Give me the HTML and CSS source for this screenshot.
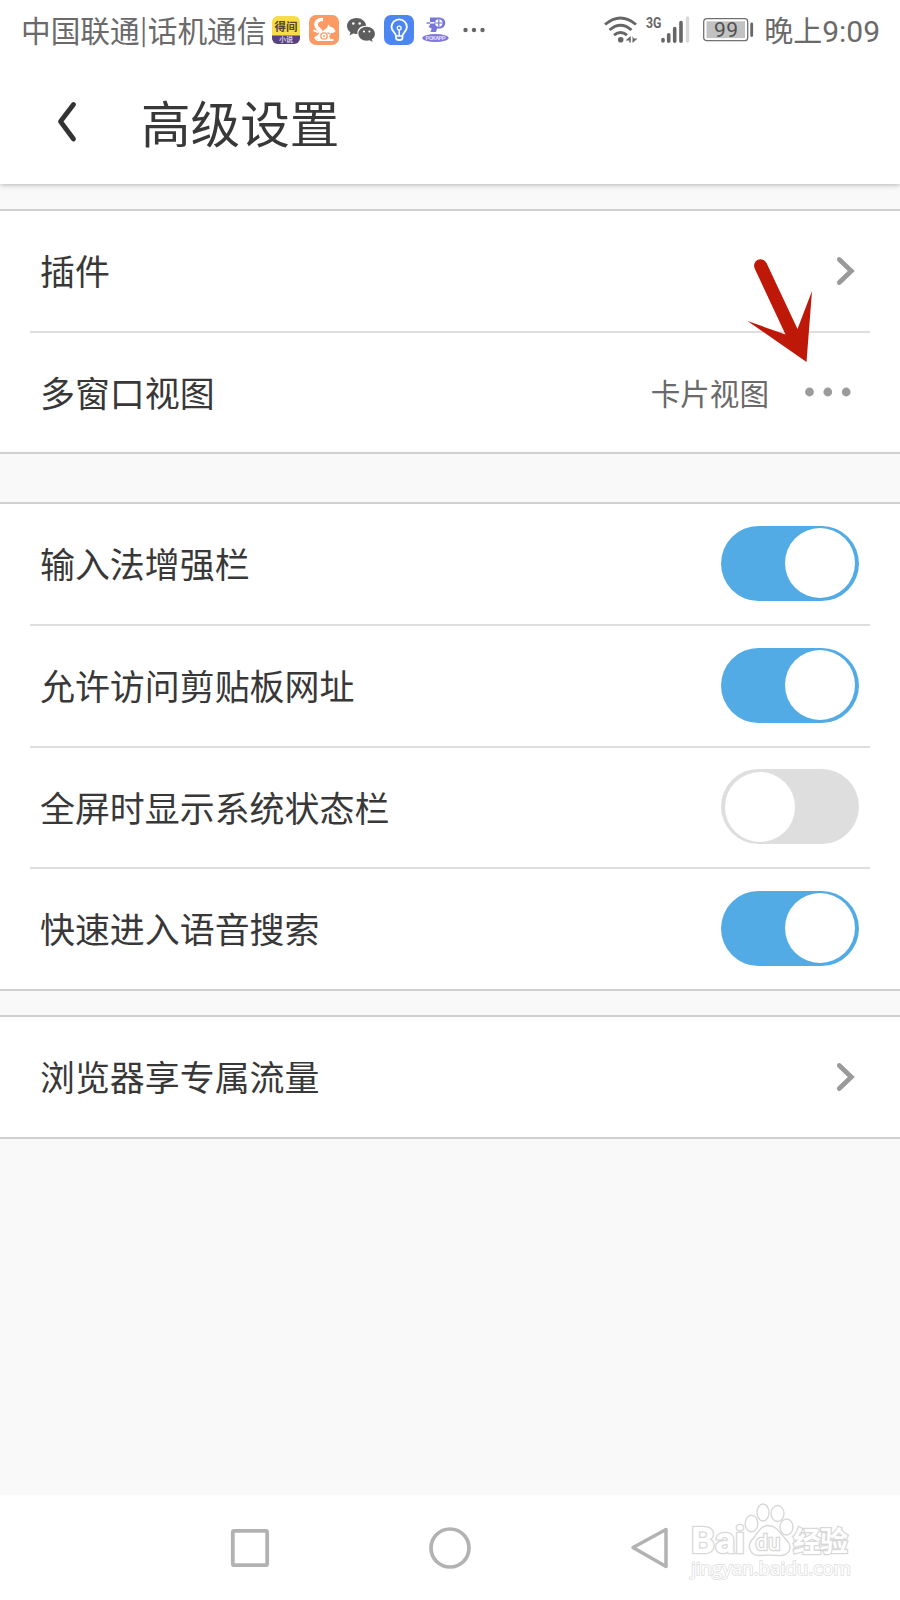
FILE: index.html
```html
<!DOCTYPE html>
<html lang="zh-CN">
<head>
<meta charset="utf-8">
<title>高级设置</title>
<link rel="stylesheet" href="styles.css">
</head>
<body>
<div class="screen">
  <header class="top">
    <div class="status">
      <span class="carrier">中国联通<span class="bar">|</span>话机通信</span>
      <div class="notices">
        <svg width="28" height="28" viewBox="0 0 28 28">
          <rect width="28" height="28" rx="6" fill="#f8dc4c"/>
          <path d="M0 19.500H28V22a6 6 0 0 1-6 6H6a6 6 0 0 1-6-6z" fill="#57407f"/>
          <text class="cjk" x="2.500" y="15" font-size="11.500" font-weight="700" fill="#54482e">得间</text>
          <text class="cjk" x="7" y="26" font-size="7" font-weight="700" fill="#d6cce0">小说</text>
        </svg>
        <svg width="30" height="30" viewBox="0 0 30 30">
          <rect width="30" height="30" rx="7" fill="#fb9a62"/>
          <path d="M14 4.500C9 4 6 7.500 7.500 11.500c1 2.500 4.500 3 4.500 6 0 2.500-2.500 4.500-6 6.500" fill="none" stroke="#fff" stroke-width="3.600"/>
          <path d="M4.500 15.500c2 .3 3.500.8 5 2" fill="none" stroke="#fff" stroke-width="2"/>
          <path d="M7 26c2-1 3-3 4-6 1-4 5-5 7-7.500l1.500-3.300 1.500 2.500c3 .3 5 2.300 5.500 4.800-1.500 1.300-3 1.500-4.500 1.500-.3 1.200-1 2.200-2 3l1.500 3h3v2z" fill="#fff"/>
          <circle cx="15" cy="21" r="3.200" fill="none" stroke="#fb9a62" stroke-width="1.300"/>
          <circle cx="15" cy="21" r="1" fill="#fb9a62"/>
          <path d="M18.500 17.500l2.500 1.500" stroke="#fb9a62" stroke-width="1.200"/>
        </svg>
        <svg width="28" height="25" viewBox="0 0 28 25">
          <path d="M9.500 0C4 0 0 3.600 0 8c0 2.600 1.300 4.700 3.400 6.200L2.500 17.500 6.200 15.600c1.500.4 3 .6 4.300.4-.8-5 3.500-8.600 8.700-8.300C18.500 3.200 14.600 0 9.500 0z" fill="#5e5e5e"/>
          <path d="M19.700 8.800c-4.700 0-8.300 3-8.300 6.900s3.600 7 8.300 7c1 0 2-.1 2.900-.4l3 1.700-.7-2.800c1.900-1.300 3-3.200 3-5.500 0-3.900-3.700-6.900-8.200-6.900z" fill="#5e5e5e"/>
          <g fill="#fff"><circle cx="6.300" cy="5.500" r="1.300"/><circle cx="12.700" cy="5.500" r="1.300"/><circle cx="17" cy="13.500" r="1.100"/><circle cx="22.400" cy="13.500" r="1.100"/></g>
        </svg>
        <svg width="30" height="30" viewBox="0 0 30 30">
          <rect width="30" height="30" rx="7" fill="#4b86f3"/>
          <path d="M12 21c0-3-4.500-4.500-4.500-9a7.700 7.700 0 0 1 15.400 0C22.900 16.500 18.500 18 18.500 21v2q0 2-3.200 2t-3.300-2z" fill="none" stroke="#fff" stroke-width="1.800"/>
          <path d="M12 21h6.500M15.200 21v-6" fill="none" stroke="#fff" stroke-width="1.500"/>
          <circle cx="15.200" cy="13" r="1.900" fill="none" stroke="#fff" stroke-width="1.300"/>
        </svg>
        <svg width="27" height="26" viewBox="0 0 27 26">
          <path d="M8 .500h9.500a5.800 5.500 0 0 1 0 11H15L14 15H8.500l1.200-3.500L6.500 10 8 8z" fill="#7776d8"/>
          <circle cx="16.800" cy="6" r="3.700" fill="#fff"/>
          <path d="M13 6h7.500M16.800 2.300v7.400" stroke="#7776d8" stroke-width="1.200"/>
          <path d="M4.500 6H8" stroke="#7776d8" stroke-width="1.400"/>
          <path d="M8 5.800h4.500" stroke="#fff" stroke-width="1.500"/>
          <ellipse cx="13.500" cy="21" rx="13.200" ry="4" fill="#8178da"/>
          <text class="latin" x="3.500" y="23.300" font-size="6" font-weight="700" fill="#ded9fa" textLength="20">POKAPP</text>
        </svg>
        <svg class="dots" width="22" height="6" viewBox="0 0 22 6" fill="#666"><circle cx="2.500" cy="3" r="2.200"/><circle cx="11" cy="3" r="2.200"/><circle cx="19.500" cy="3" r="2.200"/></svg>
      </div>
      <div class="signals">
        <svg class="wifi" width="34" height="28" viewBox="0 0 34 28" fill="none" stroke="#666" stroke-width="2.900">
          <path d="M1 8.500Q16.500-4.500 32 8.500M5.500 14Q16.500 4.500 27.500 14M10 19.200Q16.500 13.800 23 19.200"/>
          <circle cx="16.700" cy="23.700" r="2.800" fill="#666" stroke="none"/>
          <path d="M26.800 20v6.500h-1.500v-2H21.500zM28.500 27v-7l1.300 2.500h3.700z" fill="#666" stroke="none"/>
        </svg>
        <svg width="45" height="28" viewBox="0 0 45 28">
          <text class="latin" x="0" y="11.500" font-size="15" font-weight="700" fill="#666" textLength="15.500" lengthAdjust="spacingAndGlyphs">3G</text>
          <path d="M17 23.500v1.500M22.700 18.700v6.500M28.700 12.500v12.700M35 6.500v18.700" stroke="#666" stroke-width="3.600" stroke-linecap="round"/>
          <path d="M41.500 2v23" stroke="#d8d8d8" stroke-width="3.400" stroke-linecap="round"/>
        </svg>
        <svg class="battery" width="50" height="24" viewBox="0 0 50 24">
          <rect x=".7" y=".7" width="44" height="22" rx="3" fill="#fff" stroke="#707070" stroke-width="1.300"/>
          <rect x="3.500" y="3.300" width="38.500" height="16.800" fill="#c2c2c2"/>
          <path d="M48.700 6v11.500" stroke="#666" stroke-width="2.800" stroke-linecap="round"/>
          <text class="latin" x="11" y="19.200" font-size="21" fill="#505050" textLength="24">99</text>
        </svg>
        <span class="clock">晚上<span class="digits">9:09</span></span>
      </div>
    </div>
    <div class="titlebar">
      <svg class="back" width="20" height="42" viewBox="0 0 20 42"><path d="M16.500 3.500L3.500 20.500l13 17.500" fill="none" stroke="#333" stroke-width="4.800" stroke-linecap="round" stroke-linejoin="round"/></svg>
      <h1 class="title">高级设置</h1>
    </div>
  </header>

  <main class="groups">
    <section class="group">
      <div class="row"><span class="label">插件</span>
        <svg class="chevron" width="20" height="28" viewBox="0 0 20 28"><path d="M3.300 2.500l12 11.500-12 11.500" fill="none" stroke="#9a9a9a" stroke-width="4.800" stroke-linecap="round" stroke-linejoin="miter"/></svg>
      </div>
      <div class="row short"><span class="label">多窗口视图</span><span class="value">卡片视图</span>
        <svg class="more" width="46" height="10" viewBox="0 0 46 10" fill="#9b9b9b"><circle cx="4.500" cy="5" r="4.400"/><circle cx="22.800" cy="5" r="4.400"/><circle cx="41.200" cy="5" r="4.400"/></svg>
      </div>
    </section>
    <section class="group">
      <div class="row"><span class="label">输入法增强栏</span><span class="switch on"></span></div>
      <div class="row"><span class="label">允许访问剪贴板网址</span><span class="switch on"></span></div>
      <div class="row short"><span class="label">全屏时显示系统状态栏</span><span class="switch"></span></div>
      <div class="row"><span class="label">快速进入语音搜索</span><span class="switch on"></span></div>
    </section>
    <section class="group">
      <div class="row"><span class="label">浏览器享专属流量</span>
        <svg class="chevron" width="20" height="28" viewBox="0 0 20 28"><path d="M3.300 2.500l12 11.500-12 11.500" fill="none" stroke="#9a9a9a" stroke-width="4.800" stroke-linecap="round" stroke-linejoin="miter"/></svg>
      </div>
    </section>
  </main>

  <nav class="nav">
    <svg width="42" height="42" viewBox="0 0 42 42"><rect x="3.800" y="3.800" width="34.400" height="34.400" rx="1.500" fill="none" stroke="#b2b2b2" stroke-width="3.800"/></svg>
    <svg width="42" height="42" viewBox="0 0 42 42"><circle cx="21" cy="21" r="19" fill="none" stroke="#b2b2b2" stroke-width="3.700"/></svg>
    <svg width="42" height="42" viewBox="0 0 42 42"><path d="M4 20.500L37 2.500v37z" fill="none" stroke="#b2b2b2" stroke-width="3.500" stroke-linejoin="round"/></svg>
  </nav>

  <svg class="arrow" width="66" height="106" viewBox="0 0 66 106"><path d="M.500 64L38.500 77.500 7.700 11.500A6.500 6.500 0 0 1 19.500 6L50.500 72 65 34 59.500 105z" fill="#bd1808"/></svg>

  <svg class="watermark" width="170" height="82" viewBox="0 0 170 82" fill="#fff" stroke="#d8d8d8" stroke-width="1.400">
    <text class="latin outline" x="4" y="51" font-size="36" font-weight="700" textLength="54" lengthAdjust="spacingAndGlyphs">Bai</text>
    <ellipse cx="64.500" cy="21.500" rx="6.300" ry="8.300"/>
    <ellipse cx="76" cy="10.500" rx="6" ry="8.500"/>
    <ellipse cx="90.500" cy="11.500" rx="6.500" ry="8"/>
    <ellipse cx="99.500" cy="25" rx="6.500" ry="8"/>
    <path d="M81 23.500c-8 0-10 8-15 13-7 7-3 17 6 17 5 0 13-1 19 0 11 1 16-8 8-16-5-5-9-14-18-14z"/>
    <text class="latin outline" x="68.500" y="47.500" font-size="22" textLength="25">du</text>
    <text class="cjk outline" x="106" y="50" font-size="28" font-weight="700" textLength="55">经验</text>
    <text class="site" x="4" y="73" font-size="18" textLength="160" lengthAdjust="spacingAndGlyphs">jingyan.baidu.com</text>
  </svg>
</div>
</body>
</html>
```
FILE: styles.css
```css
* { box-sizing: border-box; }
body { margin: 0; background: #f9f9f9; font-family: "Noto Sans CJK SC", sans-serif; color: #383838; }
svg { display: block; flex: none; overflow: visible; }
.cjk { font-family: "Noto Sans CJK SC", sans-serif; }
.latin { font-family: Roboto, sans-serif; }
.screen { position: relative; width: 900px; height: 1600px; display: flex; flex-direction: column; overflow: hidden; }

.top { height: 184px; flex: none; background: #fff; box-shadow: 0 1px 5px rgba(0, 0, 0, .28); }
.status { height: 60px; padding: 0 20px 0 21px; display: flex; align-items: center; justify-content: space-between; color: #6a6a6a; white-space: nowrap; }
.carrier { font-size: 29.700px; line-height: 60px; width: 251px; display: flex; }
.bar { font-size: 27px; width: 8px; line-height: 57px; display: flex; justify-content: center; }
.notices { display: flex; align-items: center; gap: 8.500px; margin-right: auto; }
.dots { margin-left: 5px; }
.signals { display: flex; align-items: center; }
.wifi { margin-right: 8px; }
.battery { margin: 0 11px 0 12px; }
.clock { font-size: 29px; line-height: 60px; }
.digits { font-family: Roboto, sans-serif; font-size: 30px; }
.titlebar { height: 124px; padding-left: 57px; display: flex; align-items: center; }
.back { margin-right: 64px; }
.title { margin: 0; font-size: 49.600px; font-weight: 400; line-height: 124px; padding-bottom: 2px; }

.groups { padding-top: 25px; flex: 1; }
.group { background: #fff; border-top: 2px solid #d0d0d0; border-bottom: 2px solid #d0d0d0; margin-bottom: 24px; padding: 0 30px; }
.group:first-child { margin-bottom: 48px; }
.row { height: 120px; padding: 0 11px 2px 10px; display: flex; align-items: center; }
.row.short { height: 119px; }
.row + .row { border-top: 2px solid #dedede; height: 122px; }
.row + .row.short { height: 121px; }
.label { flex: 1; font-size: 34.950px; line-height: 60px; }
.value { font-size: 29.600px; line-height: 60px; color: #6a6a6a; margin-right: 36px; padding-top: 2px; }
.more { margin-right: 8px; }
.chevron { margin: 1px 3px 0 0; }
.switch { width: 138px; height: 75px; border-radius: 38px; background: #dedede; padding: 2.500px 4px; display: flex; }
.switch::after { content: ""; width: 70px; height: 70px; border-radius: 50%; background: #fff; }
.switch.on { background: #52abe4; justify-content: flex-end; }

.nav { height: 105px; background: #fff; display: flex; justify-content: center; align-items: center; gap: 158px; }
.arrow { position: absolute; left: 747px; top: 257px; }
.watermark { position: absolute; left: 687px; top: 1502px; }
.outline { paint-order: stroke; stroke-width: 2.600px; }
.site { font-family: "Open Sans", sans-serif; paint-order: stroke; stroke-width: 1.600px; stroke: #dedede; }
```
